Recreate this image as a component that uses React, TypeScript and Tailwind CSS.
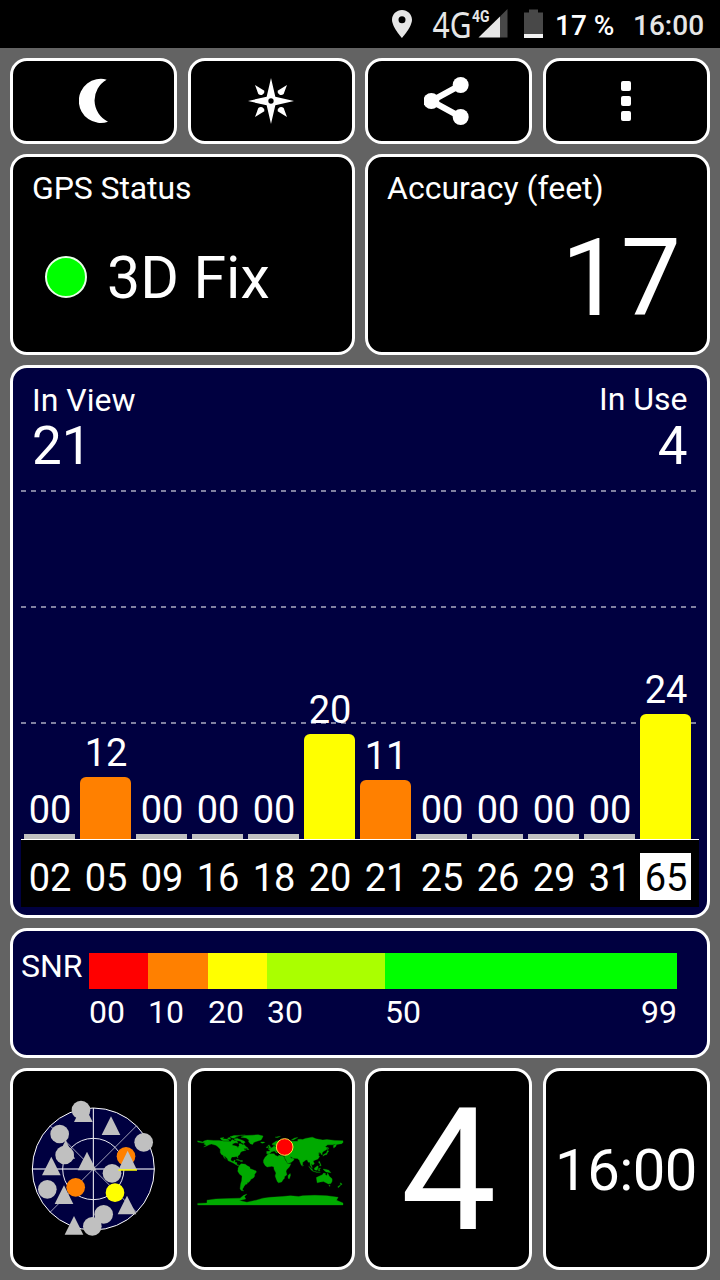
import React from "react";
import clsx from "clsx";

const satellites = [
  { id: "02", snr: "00", height: 5, color: "bg-[#c0c0c0]" },
  { id: "05", snr: "12", height: 62, color: "bg-[#ff8000]" },
  { id: "09", snr: "00", height: 5, color: "bg-[#c0c0c0]" },
  { id: "16", snr: "00", height: 5, color: "bg-[#c0c0c0]" },
  { id: "18", snr: "00", height: 5, color: "bg-[#c0c0c0]" },
  { id: "20", snr: "20", height: 105, color: "bg-[#ffff00]" },
  { id: "21", snr: "11", height: 59, color: "bg-[#ff8000]" },
  { id: "25", snr: "00", height: 5, color: "bg-[#c0c0c0]" },
  { id: "26", snr: "00", height: 5, color: "bg-[#c0c0c0]" },
  { id: "29", snr: "00", height: 5, color: "bg-[#c0c0c0]" },
  { id: "31", snr: "00", height: 5, color: "bg-[#c0c0c0]" },
  { id: "65", snr: "24", height: 125, color: "bg-[#ffff00]", used: true },
];

const legend = [
  { label: "00", color: "bg-[#ff0000]", width: "w-[59px]" },
  { label: "10", color: "bg-[#ff8000]", width: "w-[60px]" },
  { label: "20", color: "bg-[#ffff00]", width: "w-[59px]" },
  { label: "30", color: "bg-[#aaff00]", width: "w-[118px]" },
  { label: "50", color: "bg-[#00ff00]", width: "w-[292px]" },
];

const skyCircles = [
  { x: 183, y: 60 },
  { x: 119, y: 132 },
  { x: 371, y: 157 },
  { x: 134, y: 195 },
  { x: 318, y: 199, color: "#ff8000" },
  { x: 276, y: 250 },
  { x: 82, y: 298 },
  { x: 167, y: 292, color: "#ff8000" },
  { x: 285, y: 308, color: "#ffff00" },
  { x: 251, y: 373 },
  { x: 217, y: 409 },
];

const skyTriangles = [
  { x: 190, y: 96 },
  { x: 273, y: 135 },
  { x: 137, y: 206 },
  { x: 201, y: 241 },
  { x: 94, y: 256 },
  { x: 132, y: 342 },
  { x: 321, y: 373 },
  { x: 162, y: 434 },
];

// Outlines in degrees, longitude then latitude
const land = [
  "-180,69 -172,67 -168,66 -163,69 -156,71 -140,70 -128,70 -115,68 -108,68 -98,67 -95,72 -88,69 -82,69 -82,67 -87,64 -94,61 -94,58 -88,57 -82,55 -80,51 -79,55 -77,57 -78,62 -72,62 -69,59 -65,60 -60,54 -56,52 -60,50 -66,50 -64,47 -60,46 -66,44 -70,43 -74,40 -76,35 -81,31 -80,26 -82,28 -84,30 -90,29 -95,29 -97,26 -98,22 -96,19 -91,18 -90,21 -87,21 -88,16 -83,15 -83,10 -78,9 -80,7 -85,10 -92,14 -96,16 -105,20 -106,24 -112,30 -115,32 -112,25 -110,23 -115,28 -117,33 -121,35 -124,40 -124,48 -130,54 -135,58 -146,61 -152,59 -158,56 -165,54 -158,58 -165,61 -161,64 -170,64 -180,66",
  "-124,76 -115,77 -118,74 -105,73 -102,69 -117,69 -122,72",
  "-104,73 -98,73 -100,77 -106,76",
  "-95,76 -80,75 -90,77 -72,83 -62,83 -90,82 -100,79",
  "-90,73 -80,74 -68,70 -62,66 -66,62 -72,65 -74,68 -85,70",
  "-84,66 -80,65 -81,63 -87,64",
  "-73,78 -62,82 -45,83 -30,84 -18,81 -20,76 -23,71 -33,68 -41,65 -44,60 -50,62 -54,67 -53,71 -60,76",
  "-24,66 -15,66 -14,65 -19,63 -23,64",
  "-59,48 -56,51 -53,47",
  "-85,22 -80,23 -74,20 -78,20",
  "-74,20 -69,20 -69,18 -74,18",
  "-77,8 -72,12 -62,11 -57,7 -51,4 -50,0 -44,-2 -35,-6 -35,-9 -39,-14 -39,-19 -42,-23 -48,-26 -50,-30 -54,-34 -58,-35 -57,-38 -62,-39 -63,-42 -65,-43 -66,-46 -68,-49 -69,-52 -66,-55 -72,-54 -75,-50 -74,-42 -73,-36 -71,-30 -70,-18 -76,-14 -81,-6 -80,-3 -80,1",
  "-17,15 -17,21 -13,28 -9,32 -6,36 2,37 10,37 11,34 19,30 21,33 32,31 34,28 37,21 43,12 51,12 47,4 40,-3 39,-7 41,-15 35,-20 35,-24 32,-27 28,-33 20,-35 18,-33 15,-27 12,-18 14,-11 9,-1 9,4 4,6 -8,4 -13,8",
  "49,-12 50,-16 47,-25 44,-24 44,-17",
  "-9,37 -9,43 -2,43 -1,46 -5,48 2,51 8,54 8,57 11,57 11,54 20,54 22,57 24,59 30,60 22,61 25,65 22,66 17,62 19,60 16,56 13,56 10,59 5,59 5,62 14,68 25,71 40,67 33,66 38,64 44,66 46,68 54,68 68,68 68,72 74,73 80,72 87,75 104,78 113,74 130,71 140,72 160,70 180,69 180,65 177,62 164,60 162,55 157,51 156,57 163,62 155,59 142,59 136,54 141,52 139,47 132,43 128,39 129,35 126,35 125,39 121,40 118,38 122,37 119,34 122,30 118,24 110,21 106,19 109,12 105,9 101,13 104,1 99,8 98,16 94,16 91,22 87,21 80,15 80,10 77,8 73,17 72,21 67,25 57,26 50,30 51,26 56,26 59,22 52,16 43,13 39,21 35,28 36,36 28,36 26,39 30,41 40,41 38,46 31,46 28,42 23,40 23,37 19,41 14,45 13,44 18,40 16,38 10,44 3,42 0,39 -2,37",
  "-5,50 1,51 1,53 -2,57 -3,59 -6,57 -3,54",
  "-10,52 -6,52 -6,55 -9,54",
  "52,71 57,71 68,77 60,76",
  "12,78 25,80 18,77",
  "130,31 135,34 140,35 142,40 145,44 141,45 139,39 132,35",
  "142,46 144,50 142,54",
  "95,6 104,-2 106,-6 102,-4",
  "105,-6 115,-8 124,-9 114,-9",
  "109,1 117,7 119,5 116,-4 110,-3",
  "119,-5 120,1 125,1 121,0 123,-5",
  "120,18 122,18 126,7 122,7 124,12 120,14",
  "131,-1 138,-2 145,-4 150,-10 143,-9 138,-8 133,-4",
  "80,9 82,7 80,6",
  "114,-22 122,-18 129,-15 132,-11 137,-12 136,-15 140,-17 142,-11 146,-19 153,-25 153,-31 150,-37 144,-38 138,-35 132,-32 124,-33 116,-35",
  "145,-41 148,-41 147,-44",
  "173,-35 178,-38 175,-41 174,-39",
  "172,-41 174,-42 168,-47 167,-45",
  "-180,-90 -180,-86 -157,-85 -157,-78 -135,-75 -100,-74 -75,-73 -66,-66 -58,-63 -64,-69 -61,-75 -77,-79 -58,-83 -35,-78 -18,-73 0,-71 30,-69 50,-67 70,-69 80,-67 110,-66 140,-67 168,-71 164,-78 180,-85 180,-90",
];

interface PanelProps {
  className?: string;
  children: React.ReactNode;
}

const Panel = ({ className, children }: PanelProps) => (
  <div
    className={clsx(
      "min-w-0 rounded-[17px] border-[3px] border-white overflow-hidden",
      className
    )}
  >
    {children}
  </div>
);

const StatusBar = () => (
  <div className="h-12 bg-black flex justify-end items-start text-[#e6e6e6]">
    <svg className="mt-2.5 w-5 h-7" viewBox="0 0 20 28" fill="#e6e6e6">
      <path
        fillRule="evenodd"
        d="M10 0C4.500 0 0 4.400 0 9.800C0 17 10 28 10 28S20 17 20 9.800C20 4.400 15.500 0 10 0ZM10 6.300A3.500 3.500 0 1 1 10 13.300A3.500 3.500 0 1 1 10 6.300Z"
      />
    </svg>
    <svg
      className="ml-5 w-[76px] h-12 overflow-visible"
      viewBox="432 0 76 48"
      fill="#e6e6e6"
    >
      <text
        x="432.500"
        y="37.500"
        fontSize="37"
        fontFamily="'Noto Sans', sans-serif"
        textLength="39"
        lengthAdjust="spacingAndGlyphs"
      >
        4G
      </text>
      <path d="M500 16.500L507.500 9V37.500H500Z" fill="#484848" />
      <path d="M478.500 37.500L500 16.500V37.500Z" />
      <text
        x="472"
        y="21.500"
        fontSize="16.500"
        fontWeight="700"
        textLength="17.500"
        lengthAdjust="spacingAndGlyphs"
      >
        4G
      </text>
    </svg>
    <svg className="ml-4 mt-[9px] w-[19px] h-[29px]" viewBox="0 0 19 29">
      <path d="M0 3.500H5V0.500H14V3.500H19V25H0Z" fill="#484848" />
      <path d="M0 25H19V29H0Z" fill="#f2f2f2" />
    </svg>
    <span className="ml-3 mt-3 w-[60px] text-[28px] leading-none font-medium text-white whitespace-nowrap">
      17 %
    </span>
    <span className="ml-[18px] mr-[15px] mt-3 w-[72px] text-[28px] leading-none font-medium whitespace-nowrap">
      16:00
    </span>
  </div>
);

const Toolbar = () => (
  <div className="grid grid-cols-4 gap-[10.5px]">
    <Panel className="bg-black flex items-center justify-center">
      <svg className="w-[30px] h-[46px]" viewBox="235 84 90 138">
        <path d="M318 89A66 66 0 1 0 322 215A71 71 0 0 1 318 89Z" fill="#fff" />
      </svg>
    </Panel>
    <Panel className="bg-black flex items-center justify-center">
      <svg className="w-12 h-12" viewBox="-72 -72 144 144" fill="#fff">
        <path
          fillRule="evenodd"
          d="M0 -69L13 -13L69 0L13 13L0 69L-13 13L-69 0L-13 -13ZM0 -8A8 8 0 1 0 0 8A8 8 0 1 0 0 -8Z"
        />
        <path d="M48 -48L38 -21Q32 -16 26 -19Q18 -24 20 -31Z" />
        <path d="M48 48L38 21Q32 16 26 19Q18 24 20 31Z" />
        <path d="M-48 48L-38 21Q-32 16 -26 19Q-18 24 -20 31Z" />
        <path d="M-48 -48L-38 -21Q-32 -16 -26 -19Q-18 -24 -20 -31Z" />
      </svg>
    </Panel>
    <Panel className="bg-black flex items-center justify-center">
      <svg className="w-[50px] h-[50px]" viewBox="131 228 150 150" fill="#fff">
        <path d="M241 255L153 303L241 351" fill="none" stroke="#fff" strokeWidth="18" />
        <circle cx="153" cy="303" r="24" />
        <circle cx="241" cy="255" r="24" />
        <circle cx="241" cy="351" r="24" />
      </svg>
    </Panel>
    <Panel className="bg-black flex flex-col items-center justify-center gap-[5px]">
      <span className="size-2.5 rounded-[2px] bg-white"></span>
      <span className="size-2.5 rounded-[2px] bg-white"></span>
      <span className="size-2.5 rounded-[2px] bg-white"></span>
    </Panel>
  </div>
);

const SatelliteChart = () => (
  <Panel className="bg-[#000040] flex flex-col">
    <div className="flex justify-between px-[19px] pt-4 h-[121px]">
      <div>
        <p className="text-[32px] leading-none">In View</p>
        <p className="text-[53px] leading-none mt-1">21</p>
      </div>
      <div className="text-right -mt-px">
        <p className="text-[32px] leading-none">In Use</p>
        <p className="text-[53px] leading-none mt-[5px]">4</p>
      </div>
    </div>
    <div className="relative mx-2 h-[351px]">
      {/* grid lines behind the bars */}
      <div className="absolute inset-x-0 top-px flex flex-col gap-[114px] pr-[2px]">
        <div className="h-[2px] bg-[repeating-linear-gradient(90deg,#8080a0_0_5px,transparent_5px_10px)]"></div>
        <div className="h-[2px] bg-[repeating-linear-gradient(90deg,#8080a0_0_5px,transparent_5px_10px)]"></div>
        <div className="h-[2px] bg-[repeating-linear-gradient(90deg,#8080a0_0_5px,transparent_5px_10px)]"></div>
      </div>
      <div className="relative h-full flex items-end gap-[5px] pl-[3px] border-b border-white">
        {satellites.map((sat) => (
          <div key={sat.id} className="w-[51px] shrink-0 text-center">
            <p className="text-[38px] leading-none mb-[5px] pl-px">{sat.snr}</p>
            <div
              className={clsx(sat.color, sat.height > 5 && "rounded-t-[6px]")}
              style={{ height: sat.height }}
            ></div>
          </div>
        ))}
      </div>
    </div>
    <div className="mx-2 h-[67px] bg-black flex gap-[5px] pl-[3px] pt-[13px]">
      {satellites.map((sat) => (
        <div
          key={sat.id}
          className={clsx(
            "w-[51px] h-[47px] shrink-0 pt-1.5 pl-px text-center text-[38px] leading-none",
            sat.used && "bg-white text-black"
          )}
        >
          {sat.id}
        </div>
      ))}
    </div>
  </Panel>
);

const SnrLegend = () => (
  <Panel className="bg-[#000040] flex pl-2 pt-[22px]">
    <p className="w-[68px] -mt-[3px] text-[32px] leading-none">SNR</p>
    <div className="w-[588px]">
      <div className="flex h-9">
        {legend.map((item) => (
          <div key={item.label} className={clsx(item.width, item.color)}></div>
        ))}
      </div>
      <div className="flex mt-[7px] text-[32px] leading-none">
        {legend.map((item) => (
          <div key={item.label} className={clsx(item.width, "flex justify-between")}>
            <span>{item.label}</span>
            {item.label === "50" && <span>99</span>}
          </div>
        ))}
      </div>
    </div>
  </Panel>
);

const SkyView = () => (
  <svg className="w-[150px] h-40 shrink-0" viewBox="-3 -3 450 480">
    <circle cx="220" cy="237" r="183" fill="#000040" />
    <path d="M220 237L350 107M220 237L90 367M220 237L90 107M220 237L350 367" stroke="#a0a0b8" strokeWidth="3" />
    <path d="M37 237H403" stroke="#b4b4c8" strokeWidth="5" />
    <path d="M220 54V420" stroke="#fff" strokeWidth="3" />
    <circle cx="220" cy="237" r="183" fill="none" stroke="#fff" strokeWidth="3" />
    <circle cx="220" cy="237" r="92" fill="none" stroke="#e8e8f0" strokeWidth="3" />
    {skyTriangles.map((t, i) => (
      <path key={i} transform={`translate(${t.x} ${t.y})`} d="M0 -56L28 0H-28Z" fill="#c0c0c0" />
    ))}
    {skyCircles.map((c, i) => (
      <circle key={i} cx={c.x} cy={c.y} r="28" fill={c.color ?? "#c0c0c0"} />
    ))}
    <path d="M323 182L351 240H295Z" fill="#c0c0c0" />
    <path d="M295 240H351" stroke="#ffff00" strokeWidth="5" />
  </svg>
);

const WorldMap = () => (
  <svg className="w-[162px] h-[100px] shrink-0" viewBox="1 -3 486 300">
    <g
      transform="translate(242 146) scale(1.211 -1.211)"
      fill="#00aa00"
      stroke="#00aa00"
      strokeWidth="0.8"
    >
      {land.map((points, i) => (
        <polygon key={i} points={points} />
      ))}
    </g>
    <circle cx="285" cy="81" r="25" fill="#ff0000" stroke="#ffe040" strokeWidth="3" />
  </svg>
);

const App = () => {
  return (
    <div className="w-[720px] h-[1280px] bg-[#636363] text-white font-['Roboto',sans-serif] overflow-hidden">
      <StatusBar />
      <div className="grid grid-rows-[86px_201px_553px_130px_202px] gap-y-[10px] pl-[10px] pr-[10.5px] pt-[10px]">
        <Toolbar />
        <div className="grid grid-cols-2 gap-[10.5px]">
          <Panel className="bg-black px-[19px] pt-[15px]">
            <p className="text-[32px] leading-none tracking-[-0.1px]">GPS Status</p>
            <div className="flex items-center mt-[42px] pl-[13px]">
              <span className="size-[42px] rounded-full border-2 border-[#e8ffe8] bg-[#00ff00]"></span>
              <span className="ml-5 mt-0.5 text-[59px] leading-none">3D Fix</span>
            </div>
          </Panel>
          <Panel className="bg-black px-[19px] pt-[15px]">
            <p className="text-[32px] leading-none">Accuracy (feet)</p>
            <p className="mt-[21px] pr-[7px] text-right text-[107px] leading-none tracking-[-0.5px]">17</p>
          </Panel>
        </div>
        <SatelliteChart />
        <SnrLegend />
        <div className="grid grid-cols-4 gap-[10.5px]">
          <Panel className="bg-black flex items-center justify-center">
            <SkyView />
          </Panel>
          <Panel className="bg-black flex items-center justify-center">
            <WorldMap />
          </Panel>
          <Panel className="bg-black flex items-center justify-center">
            <span className="mt-[3px] text-[171px] leading-none">4</span>
          </Panel>
          <Panel className="bg-black flex items-center justify-center">
            <span className="mt-[2px] text-[58px] leading-none tracking-[-0.5px]">16:00</span>
          </Panel>
        </div>
      </div>
    </div>
  );
};

export default App;
